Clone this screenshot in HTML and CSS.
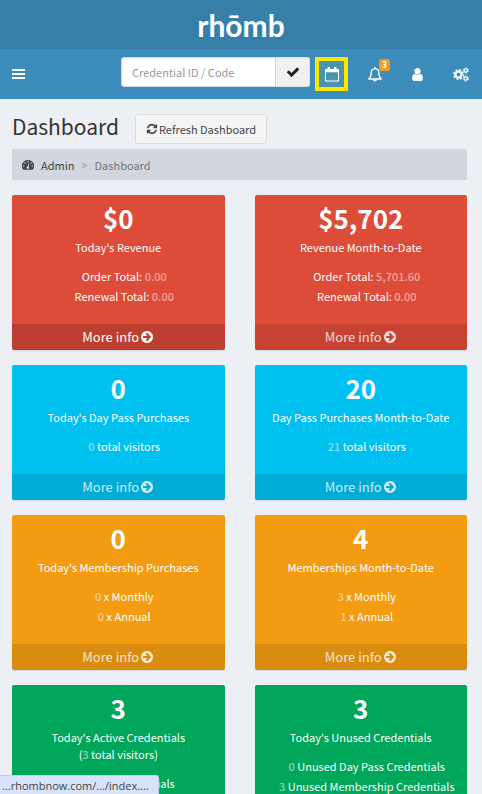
FILE: index.html
```html
<!DOCTYPE html>
<html lang="en">
<head>
<meta charset="utf-8">
<meta name="viewport" content="width=device-width, initial-scale=1">
<title>Dashboard</title>
<link rel="stylesheet" href="styles.css">
</head>
<body>
<svg class="sprite" aria-hidden="true">
  <symbol id="arrow" viewBox="0 0 1792 1792"><path d="M1413 896q0-27-18-45l-91-91-362-362q-18-18-45-18t-45 18l-91 91q-18 18-18 45t18 45l189 189h-502q-26 0-45 19t-19 45v128q0 26 19 45t45 19h502l-189 189q-19 19-19 45t19 45l91 91q18 18 45 18t45-18l362-362 91-91q18-18 18-45zm251 0q0 209-103 385.500t-279.500 279.500-385.500 103-385.500-103-279.500-279.500-103-385.500 103-385.500 279.500-279.500 385.500-103 385.500 103 279.500 279.500 103 385.500z"/></symbol>
</svg>
<header>
  <a class="logo" href="#">rhōmb</a>
  <nav class="navbar">
    <button class="toggle" type="button" aria-label="Toggle navigation">
      <svg viewBox="0 0 13 11" width="13" height="11"><path d="M0 0h13v2H0zM0 4h13v2H0zM0 8h13v2H0z"/></svg>
    </button>
    <form class="search">
      <input type="text" placeholder="Credential ID / Code" aria-label="Credential ID / Code">
      <button type="button" aria-label="Check credential">
        <svg viewBox="0 0 1792 1792" width="14" height="14"><path d="M1671 566q0 40-28 68l-724 724-136 136q-28 28-68 28t-68-28l-136-136-362-362q-28-28-28-68t28-68l136-136q28-28 68-28t68 28l294 295 656-657q28-28 68-28t68 28l136 136q28 28 28 68z"/></svg>
      </button>
    </form>
    <div class="actions">
      <a class="calendar" href="#" aria-label="Calendar">
        <svg viewBox="0 0 14 15" width="14" height="15"><path fill-rule="evenodd" d="M1 2h1.500V1q0-1 1-1h.5q1 0 1 1v1h4V1q0-1 1-1h.5q1 0 1 1v1H13q1 0 1 1v10.500q0 1-1 1H1q-1 0-1-1V3q0-1 1-1zm0 3.200v8.300h12V5.200z"/></svg>
      </a>
      <a href="#" aria-label="Notifications">
        <svg viewBox="0 0 14 15" width="14" height="15"><path fill="none" stroke="currentColor" stroke-linejoin="round" stroke-width="1.300" d="M7 1.600C4.500 1.900 3.200 3.500 3.200 5.500 3.200 8.500 2.500 10.500.8 12h12.400c-1.700-1.500-2.400-3.500-2.400-6.500 0-2-1.300-3.600-3.800-3.900z"/><path d="M6.300 0h1.400v2H6.300zM5 12.500h4a2 2 0 0 1-4 0z"/></svg>
        <span class="badge">3</span>
      </a>
      <a href="#" aria-label="Account">
        <svg viewBox="0 0 1792 1792" width="15" height="15"><path d="M1536 1399q0 109-62.500 187t-150.500 78h-854q-88 0-150.500-78t-62.500-187q0-85 8.500-160.500t31.500-152 58.500-131 94-89 134.500-34.500q131 128 313 128t313-128q76 0 134.500 34.500t94 89 58.500 131 31.500 152 8.500 160.500zm-256-887q0 159-112.500 271.500t-271.500 112.500-271.500-112.500-112.500-271.500 112.500-271.500 271.500-112.500 271.500 112.500 112.500 271.500z"/></svg>
      </a>
      <a href="#" aria-label="Settings">
        <svg class="outline" viewBox="0 0 16 15" width="16" height="15">
          <circle cx="5.500" cy="7.500" r="3.100" stroke-width="2.200"/><circle cx="5.500" cy="7.500" r="4.700" stroke-width="1.500" stroke-dasharray="1.850 1.840"/>
          <circle cx="12.800" cy="3.500" r="1.700" stroke-width="1.300"/><circle cx="12.800" cy="3.500" r="2.600" stroke-dasharray="1.400 1.320"/>
          <circle cx="12.800" cy="11.500" r="1.700" stroke-width="1.300"/><circle cx="12.800" cy="11.500" r="2.600" stroke-dasharray="1.400 1.320"/>
        </svg>
      </a>
    </div>
  </nav>
</header>
<main>
  <div class="heading">
    <h1>Dashboard</h1>
    <button class="refresh" type="button">
      <svg viewBox="0 0 1792 1792" width="12" height="12"><path d="M1639 1056q0 5-1 7-64 268-268 434.500t-478 166.500q-146 0-282.500-55t-243.500-157l-129 129q-19 19-45 19t-45-19-19-45v-448q0-26 19-45t45-19h448q26 0 45 19t19 45-19 45l-137 137q71 66 161 102t187 36q134 0 250-65t186-179q11-17 53-117 8-23 30-23h192q13 0 22.500 9.500t9.500 22.500zm25-800v448q0 26-19 45t-45 19h-448q-26 0-45-19t-19-45 19-45l138-138q-148-137-349-137-134 0-250 65t-186 179q-11 17-53 117-8 23-30 23h-199q-13 0-22.500-9.500t-9.500-22.500v-7q65-268 270-434.500t480-166.500q146 0 284 55.500t245 156.500l130-129q19-19 45-19t45 19 19 45z"/></svg>
      Refresh Dashboard
    </button>
  </div>
  <nav class="breadcrumb" aria-label="Breadcrumb">
    <svg viewBox="0 0 12 10" width="12" height="10"><path fill-rule="evenodd" d="M6 0a6 6 0 0 1 5.100 9.200q-.3.600-.9.600H1.800q-.6 0-.9-.6A6 6 0 0 1 6 0zM1.700 5.200a.8.800 0 1 0 0 1.600.8.800 0 0 0 0-1.600zM3 2.200a.8.800 0 1 0 0 1.600.8.800 0 0 0 0-1.600zM6 1a.8.800 0 1 0 0 1.600A.8.800 0 0 0 6 1zM9 2.200a.8.800 0 1 0 0 1.600.8.800 0 0 0 0-1.600zM10.300 5.200a.8.800 0 1 0 0 1.600.8.800 0 0 0 0-1.600zM6.500 3.600 5.700 6.300a1.300 1.300 0 1 0 .9.200l.7-2.700z"/></svg>
    <a href="#">Admin</a><span class="sep">&gt;</span><span>Dashboard</span>
  </nav>
  <div class="tiles">
    <section class="tile red hovered">
      <div class="inner"><h2>$0</h2><p>Today's Revenue</p>
      <ul><li>Order Total: <b>0.00</b></li><li>Renewal Total: <b>0.00</b></li></ul></div>
      <a href="#">More info <svg><use href="#arrow"/></svg></a>
    </section>
    <section class="tile red">
      <div class="inner"><h2>$5,702</h2><p>Revenue Month-to-Date</p>
      <ul><li>Order Total: <b>5,701.60</b></li><li>Renewal Total: <b>0.00</b></li></ul></div>
      <a href="#">More info <svg><use href="#arrow"/></svg></a>
    </section>
    <section class="tile aqua">
      <div class="inner"><h2>0</h2><p>Today's Day Pass Purchases</p>
      <ul><li><b>0</b> total visitors</li></ul></div>
      <a href="#">More info <svg><use href="#arrow"/></svg></a>
    </section>
    <section class="tile aqua">
      <div class="inner"><h2>20</h2><p>Day Pass Purchases Month-to-Date</p>
      <ul><li><b>21</b> total visitors</li></ul></div>
      <a href="#">More info <svg><use href="#arrow"/></svg></a>
    </section>
    <section class="tile orange">
      <div class="inner"><h2>0</h2><p>Today's Membership Purchases</p>
      <ul><li><b>0</b> x Monthly</li><li><b>0</b> x Annual</li></ul></div>
      <a href="#">More info <svg><use href="#arrow"/></svg></a>
    </section>
    <section class="tile orange">
      <div class="inner"><h2>4</h2><p>Memberships Month-to-Date</p>
      <ul><li><b>3</b> x Monthly</li><li><b>1</b> x Annual</li></ul></div>
      <a href="#">More info <svg><use href="#arrow"/></svg></a>
    </section>
    <section class="tile green">
      <div class="inner"><h2>3</h2><p>Today's Active Credentials<br>(<b>3</b> total visitors)</p>
      <ul><li><b>3</b> Active Credentials</li></ul></div>
    </section>
    <section class="tile green">
      <div class="inner"><h2>3</h2><p>Today's Unused Credentials</p>
      <ul><li><b>0</b> Unused Day Pass Credentials</li><li><b>3</b> Unused Membership Credentials</li></ul></div>
    </section>
  </div>
</main>
<div class="status">...rhombnow.com/.../index....</div>
</body>
</html>
```
FILE: styles.css
```css
* { box-sizing: border-box; }
body {
  margin: 0;
  height: 100vh;
  overflow: hidden;
  background: #ecf0f5;
  color: #333;
  font-family: "Noto Sans CJK SC", "Open Sans", sans-serif;
  font-size: 11px;
  line-height: 20px;
}
a { color: inherit; text-decoration: none; }
button, input { font: inherit; }
svg { fill: currentColor; flex: none; }
.outline { fill: none; stroke: currentColor; }
.sprite { display: none; }

.logo {
  display: block;
  height: 49px;
  background: #367fa9;
  color: #fff;
  font: 700 30px/51px Lato, sans-serif;
  text-align: center;
}
.navbar {
  display: flex;
  align-items: center;
  height: 50px;
  background: #3c8dbc;
  color: #fff;
}
.toggle {
  display: flex;
  padding: 12px;
  border: 0;
  background: none;
  color: inherit;
}
.search { display: flex; margin-left: auto; margin-top: -4px; }
.search input {
  width: 155px;
  height: 30px;
  padding: 0 10px;
  border: 1px solid #d2d6de;
  border-radius: 3px 0 0 3px;
  background: #fff;
}
.search input::placeholder { color: #999; }
.search button {
  display: flex;
  align-items: center;
  justify-content: center;
  width: 34px;
  border: 1px solid #ddd;
  border-left: 0;
  border-radius: 0 3px 3px 0;
  background: #f0f0f0;
  color: #222;
}
.actions { display: grid; grid-template-columns: repeat(4, 43px); }
.actions a {
  position: relative;
  display: flex;
  align-items: center;
  justify-content: center;
  height: 34px;
}
.actions .calendar {
  justify-self: center;
  width: 33px;
  border: 4px solid #fde500;
  background: #4b94b0;
}
.badge {
  position: absolute;
  top: 2px;
  right: 6px;
  padding: 0 3px;
  border-radius: 2px;
  background: #f39c12;
  font: 700 9px/12px "Noto Sans CJK SC", sans-serif;
}

main { padding: 15px 15px 0 12px; }
.heading { display: flex; align-items: flex-start; gap: 16px; }
h1 { margin: 0; font-size: 21px; font-weight: 400; line-height: 24px; }
.refresh {
  display: flex;
  align-items: center;
  gap: 1px;
  height: 30px;
  padding: 0 10px;
  border: 1px solid #ddd;
  border-radius: 3px;
  background: #f4f4f4;
  color: #444;
}
.breadcrumb {
  display: flex;
  align-items: center;
  height: 31px;
  margin: 5px 0 15px;
  padding: 0 10px;
  border-radius: 2px;
  background: #d2d6de;
  color: #777;
}
.breadcrumb svg { color: #444; }
.breadcrumb a { margin-left: 7px; color: #444; }
.sep { margin: 0 7px; color: #99a; }

.tiles {
  display: grid;
  grid-template-columns: 1fr 1fr;
  gap: 15px 30px;
  align-items: start;
}
.tile {
  display: flex;
  flex-direction: column;
  overflow: hidden;
  border-radius: 2px;
  box-shadow: 0 1px 1px rgba(0, 0, 0, .1);
  color: #fff;
  text-align: center;
}
.inner { padding: 9px 10px 18px; }
h2 { margin: 0 0 7px; font-size: 26px; font-weight: 700; line-height: 28px; }
.tile p { margin: 0 0 10px; line-height: 17px; }
ul { margin: 0; padding: 0 0 0 12px; list-style: none; }
.tile b { font-weight: 500; opacity: .5; }
.tile > a {
  display: flex;
  align-items: center;
  justify-content: center;
  gap: 1px;
  height: 26px;
  background: rgba(0, 0, 0, .1);
  color: rgba(255, 255, 255, .8);
  font-size: 13px;
}
.tile > a svg { width: 14px; height: 14px; }
.hovered > a { background: rgba(0, 0, 0, .15); color: #fff; }
.red { background: #dd4b39; }
.aqua { background: #00c0ef; }
.orange { background: #f39c12; }
.green { background: #00a65a; }

.status {
  position: fixed;
  left: 0;
  bottom: 0;
  height: 19px;
  padding: 0 9px 0 2px;
  border: 1px solid #c4cfe4;
  border-width: 1px 1px 0 0;
  border-radius: 0 3px 0 0;
  background: #d8e2f8;
  color: #444;
  font: 11px/20px "Open Sans", sans-serif;
}
```
